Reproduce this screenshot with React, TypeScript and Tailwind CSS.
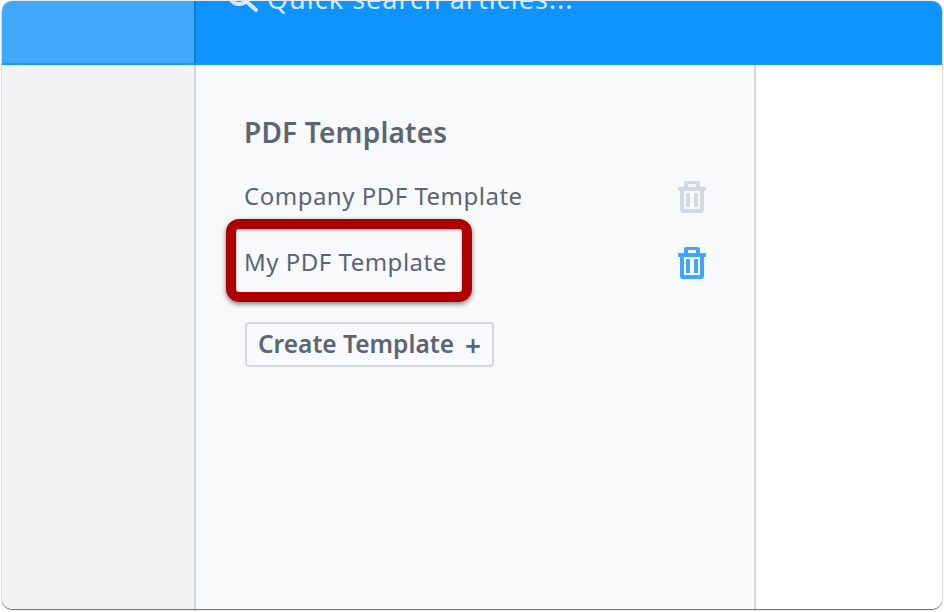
function TrashIcon({ className }: { className: string }) {
  return (
    <svg viewBox="0 0 28 32" className={className} fill="currentColor" aria-hidden="true">
      <path
        fillRule="evenodd"
        d="M8 0h12a2 2 0 0 1 2 2v4h5a1 1 0 0 1 1 1v2a1 1 0 0 1-1 1h-1v19a3 3 0 0 1-3 3H5a3 3 0 0 1-3-3V10H1a1 1 0 0 1-1-1V7a1 1 0 0 1 1-1h5V2a2 2 0 0 1 2-2Zm2 3v3h8V3h-8ZM6 10v18h16V10H6Z"
      />
      <rect x="8" y="12" width="4" height="14" rx="0.500" />
      <rect x="16" y="12" width="4" height="14" rx="0.500" />
    </svg>
  );
}

function SearchBar() {
  return (
    <div className="flex-1 relative bg-[#0f94ff] border-l-2 border-[#0c7ed8] overflow-hidden">
      <div className="absolute -top-[19px] left-[29px] flex items-center gap-[8px] text-[27px] leading-[34px] tracking-[1px] text-white/80">
        <svg viewBox="0 0 34 34" className="w-[34px] h-[34px]" fill="none" stroke="currentColor" strokeWidth="4" strokeLinecap="round" aria-hidden="true">
          <circle cx="14" cy="12" r="10" />
          <path d="M21.500 19.500 31 28" />
        </svg>
        <span className="whitespace-nowrap">Quick search articles...</span>
      </div>
    </div>
  );
}

function TemplateRow({ name, iconClass }: { name: string; iconClass: string }) {
  return (
    <div className="h-[66px] flex items-center justify-between">
      <span className="text-[24px] leading-[32px] tracking-[0.5px] text-[#5b6675] -mt-[2px] -ml-px">{name}</span>
      <TrashIcon className={`w-[28px] h-[32px] ${iconClass}`} />
    </div>
  );
}

export default function App() {
  return (
    <div className="w-[944px] h-[612px] bg-white overflow-hidden font-['Noto_Sans',sans-serif]">
      <div className="w-[940px] h-[608px] ml-[2px] mt-px rounded-[10px] bg-white overflow-hidden flex flex-col shadow-[0_1px_1px_rgba(0,0,0,0.55),0_0_2px_rgba(0,0,0,0.35)]">
        <header className="h-[64px] flex border-b-2 border-[#1a97fb] shrink-0">
          <div className="w-[192px] bg-[#42a8ff]" />
          <SearchBar />
        </header>
        <div className="flex-1 flex min-h-0">
          <aside className="w-[194px] bg-[#f1f2f4] border-r-2 border-[#d2d8df]" />
          <main className="w-[560px] bg-[#f8f9fb] border-r-2 border-[#d2d8df] pl-[49px] pr-[48px] pt-[50px]">
            <h2 className="text-[28px] leading-[36px] tracking-[0.2px] font-semibold text-[#5b6675] -mt-px -ml-px">PDF Templates</h2>
            <div className="mt-[14px]">
              <TemplateRow name="Company PDF Template" iconClass="text-[#d3d9e0]" />
              <div className="relative">
                <TemplateRow name="My PDF Template" iconClass="text-[#3ea6ff]" />
                <div className="absolute left-[-19px] top-[-11px] w-[246px] h-[83px] rounded-[13px] border-[10px] border-[#ae0000] shadow-[0_2px_5px_rgba(0,0,0,0.5),inset_0_1px_3px_rgba(0,0,0,0.3)]" />
              </div>
            </div>
            <button className="mt-[26px] h-[45px] w-[249px] flex items-center justify-center gap-[11px] rounded-[4px] border-2 border-[#d5d7da] text-[24.500px] font-semibold text-[#5b6675]">
              <span>Create Template</span>
              <span className="text-[28px] leading-none">+</span>
            </button>
          </main>
          <div className="flex-1 bg-white" />
        </div>
      </div>
    </div>
  );
}
